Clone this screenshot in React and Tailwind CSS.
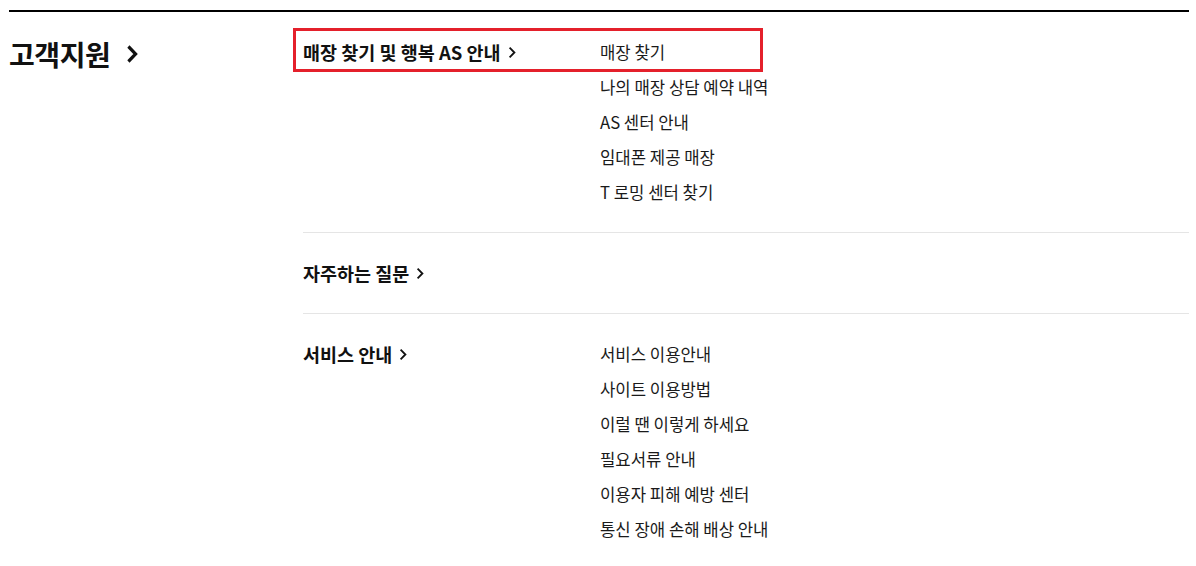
import React from 'react';

const sections = [
  {
    title: '매장 찾기 및 행복 AS 안내',
    items: ['매장 찾기', '나의 매장 상담 예약 내역', 'AS 센터 안내', '임대폰 제공 매장', 'T 로밍 센터 찾기'],
    focused: true,
  },
  { title: '자주하는 질문', items: [] },
  {
    title: '서비스 안내',
    items: ['서비스 이용안내', '사이트 이용방법', '이럴 땐 이렇게 하세요', '필요서류 안내', '이용자 피해 예방 센터', '통신 장애 손해 배상 안내'],
  },
];

const Chevron = ({ w = 10, h = 16, stroke = 2.2 }) => (
  <svg width={w} height={h} viewBox="0 0 10 16" fill="none" preserveAspectRatio="none" className="inline-block">
    <path d="M2 2l6 6-6 6" stroke="#111" strokeWidth={stroke} />
  </svg>
);

const Section = ({ title, items, focused, last }) => (
  <div className={`relative flex pt-[23px] pb-[22px] ${last ? '' : 'border-b border-[#e5e5e5]'}`}>
    {focused && (
      <div className="absolute left-[-10px] top-[16px] w-[470px] h-[44px] border-[3px] border-[#e4202b]" />
    )}
    <div className="w-[297px] shrink-0 h-[35px] flex items-center gap-[7px] text-[18.5px] font-bold text-[#111]">
      {title}
      <Chevron w={8} h={13} stroke={2.3} />
    </div>
    <ul className="flex flex-col">
      {items.map((it) => (
        <li key={it} className="h-[35px] flex items-center text-[16.7px] text-[#1a1a1a]">{it}</li>
      ))}
    </ul>
  </div>
);

export default function App() {
  return (
    <div
      className="w-[1196px] h-[566px] bg-white px-[7px] pt-[10px] overflow-hidden"
      style={{ fontFamily: '"Noto Sans CJK KR", "Noto Sans", sans-serif' }}
    >
      <div className="border-t-2 border-black flex ml-[2px]">
        <div className="w-[294px] shrink-0 pt-[22px] flex items-center gap-[16px] h-[40px] box-content text-[28px] font-bold text-[#111] tracking-[-0.4px] self-start">
          고객지원
          <Chevron w={12} h={20} stroke={2.6} />
        </div>
        <div className="flex-1 flex flex-col">
          {sections.map((s, i) => (
            <Section key={s.title} {...s} last={i === sections.length - 1} />
          ))}
        </div>
      </div>
    </div>
  );
}
